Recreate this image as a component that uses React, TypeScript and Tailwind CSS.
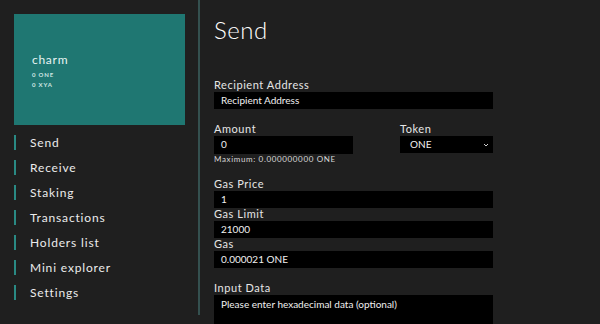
const navItems = ['Send', 'Receive', 'Staking', 'Transactions', 'Holders list', 'Mini explorer', 'Settings'];

const Label = ({ children }: { children: React.ReactNode }) => (
  <p className="text-[11px] leading-[12px] tracking-[0.05em] text-[#e6e6e6]">{children}</p>
);

const Field = ({ value, className = '' }: { value: string; className?: string }) => (
  <div className={`mt-[1px] h-[17px] bg-black px-[7px] text-[10px] leading-[17px] text-[#f0f0f0] ${className}`}>{value}</div>
);

export default function App() {
  return (
    <div className="flex h-[324px] w-[600px] overflow-hidden bg-[#1f1f1f] font-['Lato',sans-serif] text-white">
      {/* Sidebar */}
      <aside className="flex w-[198px] shrink-0 flex-col">
        <div className="mx-[14px] mt-[14px] flex h-[111px] w-[171px] flex-col justify-center bg-[#1f7772] pl-[18px] pt-[2px]">
          <p className="text-[12px] leading-[16px] tracking-[0.06em] text-[#e8f4f2]">charm</p>
          <p className="mt-[2px] text-[6px] font-bold leading-[10px] tracking-[0.14em] text-[#cfe6e3]">0 ONE</p>
          <p className="text-[6px] font-bold leading-[10px] tracking-[0.14em] text-[#cfe6e3]">0 XYA</p>
        </div>
        <nav className="mt-[5px] flex flex-col">
          {navItems.map((item) => (
            <div key={item} className="flex h-[25px] items-center">
              <span className="ml-[14px] h-[15px] w-[2px] bg-[#2a8a84]" />
              <span className="ml-[14px] text-[12px] tracking-[0.07em] text-[#ececec]">{item}</span>
            </div>
          ))}
        </nav>
      </aside>

      <div className="mb-[9px] w-[2px] shrink-0 bg-[#34504f]" />

      {/* Main */}
      <main className="flex w-[279px] flex-col pl-[14px] pt-[15px]">
        <h1 className="text-[24px] font-light leading-[30px] tracking-[0.02em] text-white">Send</h1>
        <div className="mt-[4px] h-[2px] w-[223px] bg-[#e8e8e8]" />

        <div className="mt-[30px]">
          <Label>Recipient Address</Label>
          <Field value="Recipient Address" className="w-[279px]" />
        </div>

        <div className="mt-[14px] flex w-[279px] justify-between">
          <div>
            <Label>Amount</Label>
            <Field value="0" className="h-[18px] w-[139px]" />
            <p className="text-[8px] leading-[10px] tracking-[0.08em] text-[#d8d8d8]">Maximum: 0.000000000 ONE</p>
          </div>
          <div className="w-[93px]">
            <Label>Token</Label>
            <div className="mt-[1px] flex h-[17px] items-center justify-between bg-black pl-[10px] pr-[4px] text-[10px] text-[#f0f0f0]">
              <span>ONE</span>
              <svg width="6" height="4" viewBox="0 0 6 4" fill="none">
                <path d="M1 1l2 2 2-2" stroke="#cfcfcf" strokeWidth="1" />
              </svg>
            </div>
          </div>
        </div>

        <div className="mt-[14px]">
          <Label>Gas Price</Label>
          <Field value="1" className="w-[279px]" />
        </div>
        <div>
          <Label>Gas Limit</Label>
          <Field value="21000" className="w-[279px]" />
        </div>
        <div>
          <Label>Gas</Label>
          <Field value="0.000021 ONE" className="w-[279px]" />
        </div>

        <div className="mt-[14px]">
          <Label>Input Data</Label>
          <div className="mt-[1px] h-[40px] w-[279px] bg-black px-[7px] pt-[2px] text-[10px] leading-[14px] text-[#f0f0f0]">
            Please enter hexadecimal data (optional)
          </div>
        </div>
      </main>
    </div>
  );
}
